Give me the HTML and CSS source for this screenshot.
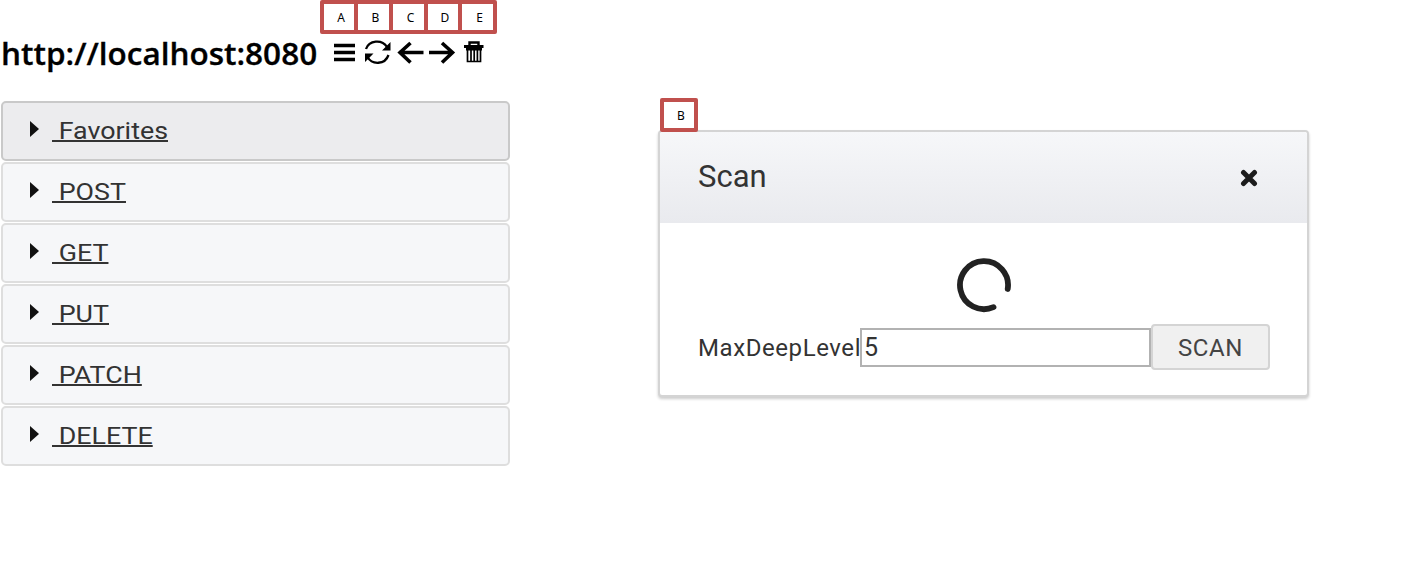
FILE: index.html
```html
<!DOCTYPE html>
<html lang="en">
<head>
<meta charset="utf-8">
<title>API Explorer</title>
<link rel="stylesheet" href="styles.css">
</head>
<body>
<main class="page">
  <section class="explorer">
    <header class="host">
      <h1 class="host-name">http://localhost:8080</h1>
      <svg class="toolbar" width="160" height="32" viewBox="330 36 160 32" fill="none" stroke="#000">
        <path d="M334 45.500h21M334 52.500h21M334 59.500h21" stroke-width="3.400"/>
        <path d="M366 49C369 40 382 39 387 47M388.500 55C385 65 372 65 367.500 57" stroke-width="2.300"/>
        <path d="M390.500 42v8.500h-8.500zM365 62v-8.500h8.500z" fill="#000" stroke="none"/>
        <path d="M423.500 52.500H399M410.500 43L400 52.500L410.500 62.500" stroke-width="3.600"/>
        <path d="M429 52.500H453M442 43L452.500 52.500L442 62.500" stroke-width="3.600"/>
        <path d="M469.500 45.500V42.500H478.500V45.500" stroke-width="2.400"/>
        <path d="M464 45H483.500V48H482V50.500H466V48H464z" fill="#000" stroke="none"/>
        <path d="M467.500 50V61.500H480.500V50M471 50V61M474.200 50V61M477.400 50V61" stroke-width="1.700"/>
      </svg>
    </header>
    <ul class="groups">
      <li class="group active"><i class="caret"></i><a class="label">&nbsp;Favorites</a></li>
      <li class="group"><i class="caret"></i><a class="label">&nbsp;POST</a></li>
      <li class="group"><i class="caret"></i><a class="label">&nbsp;GET</a></li>
      <li class="group"><i class="caret"></i><a class="label">&nbsp;PUT</a></li>
      <li class="group"><i class="caret"></i><a class="label">&nbsp;PATCH</a></li>
      <li class="group"><i class="caret"></i><a class="label">&nbsp;DELETE</a></li>
    </ul>
    <span class="callout callout-a">A</span>
    <span class="callout callout-b">B</span>
    <span class="callout callout-c">C</span>
    <span class="callout callout-d">D</span>
    <span class="callout callout-e">E</span>
  </section>
  <section class="dialog">
    <header class="dialog-head">
      <h2 class="dialog-title">Scan</h2>
      <svg class="close" width="18" height="18" viewBox="0 0 18 18"><path d="M3.500 3.500L14.500 14.500M14.500 3.500L3.500 14.500" stroke="#1c1c1c" stroke-width="5" stroke-linecap="round"/></svg>
    </header>
    <div class="dialog-body">
      <svg class="spinner" width="56" height="56" viewBox="0 0 56 56"><path d="M51.700 32A24 24 0 1 0 37.500 50.200" fill="none" stroke="#222" stroke-width="5.800" stroke-linecap="round"/></svg>
      <div class="scan-row">
        <label class="field-label">MaxDeepLevel</label>
        <div class="field">5</div>
        <button class="scan">SCAN</button>
      </div>
    </div>
    <span class="callout callout-dialog">B</span>
  </section>
</main>
</body>
</html>
```
FILE: styles.css
```css
* { box-sizing: border-box; }
body { margin: 0; background: #fff; font-family: Roboto, sans-serif; color: #333; }
.page { display: flex; align-items: flex-start; gap: 148px; width: 1401px; height: 562px; overflow: hidden; }

.explorer { position: relative; width: 510px; padding: 36px 0 0 1px; }
.host { display: flex; height: 65px; align-items: flex-start; }
.host-name { margin: 0; width: 329px; font: 600 30px/36px "Open Sans", sans-serif; color: #000; white-space: nowrap; -webkit-text-stroke: .3px #000; transform: scaleX(1.05); transform-origin: left; }
.toolbar { flex: none; }

.groups { display: flex; flex-direction: column; gap: 1px; margin: 0; padding: 0; list-style: none; }
.group { display: flex; height: 60px; padding: 0 0 0 27px; border: 2px solid #dedede; border-radius: 5px; background: #f6f7f9; }
.group.active { border-color: #c9c9c9; background: #ececee; }
.caret { width: 9px; height: 16px; margin: 18px 13px 0 0; background: #111; clip-path: polygon(0 0, 100% 50%, 0 100%); }
.label { font-size: 24.5px; line-height: 55px; text-decoration: underline; text-decoration-thickness: 2px; text-underline-offset: 1px; text-decoration-skip-ink: none; transform: scaleX(1.095); transform-origin: left; }

.callout { position: absolute; top: 0; width: 39px; height: 34px; padding-left: 4px; border: 4px solid #c0504d; border-radius: 2px; font: 12px/27px "Noto Sans", sans-serif; color: #000; text-align: center; }
.callout-a { left: 320px; width: 38px; }
.callout-b { left: 354px; }
.callout-c { left: 389px; }
.callout-d { left: 424px; width: 38px; }
.callout-e { left: 458px; }
.callout-dialog { top: -34px; left: 0; width: 38px; }

.dialog { position: relative; width: 651px; height: 267px; margin-top: 130px; border: 2px solid #d4d4d4; border-radius: 4px; background: #fff; box-shadow: 0 2px 3px rgba(0, 0, 0, .2); }
.dialog-head { display: flex; justify-content: space-between; height: 91px; padding: 37px 49px 0 38px; border-radius: 3px 3px 0 0; background: linear-gradient(#f6f7f9, #e9eaee); }
.dialog-title { margin: 0; font-size: 31px; font-weight: 400; line-height: 16px; }
.dialog-body { display: flex; flex-direction: column; align-items: center; padding-top: 34px; }
.scan-row { display: flex; align-items: center; width: 572px; margin: 11px 0 0 1px; }
.field-label { width: 162px; font-size: 24px; letter-spacing: .58px; line-height: 44px; padding-top: 2px; white-space: nowrap; }
.field { width: 291px; height: 39px; padding-left: 2px; border: 2px solid #b2b2b2; font-size: 25px; line-height: 36px; }
.scan { width: 119px; height: 46px; padding: 2px 0 0; border: 2px solid #d4d4d4; border-radius: 4px; background: #f0f0f0; font: 24px/38px Roboto, sans-serif; letter-spacing: .6px; color: #444; }
```
